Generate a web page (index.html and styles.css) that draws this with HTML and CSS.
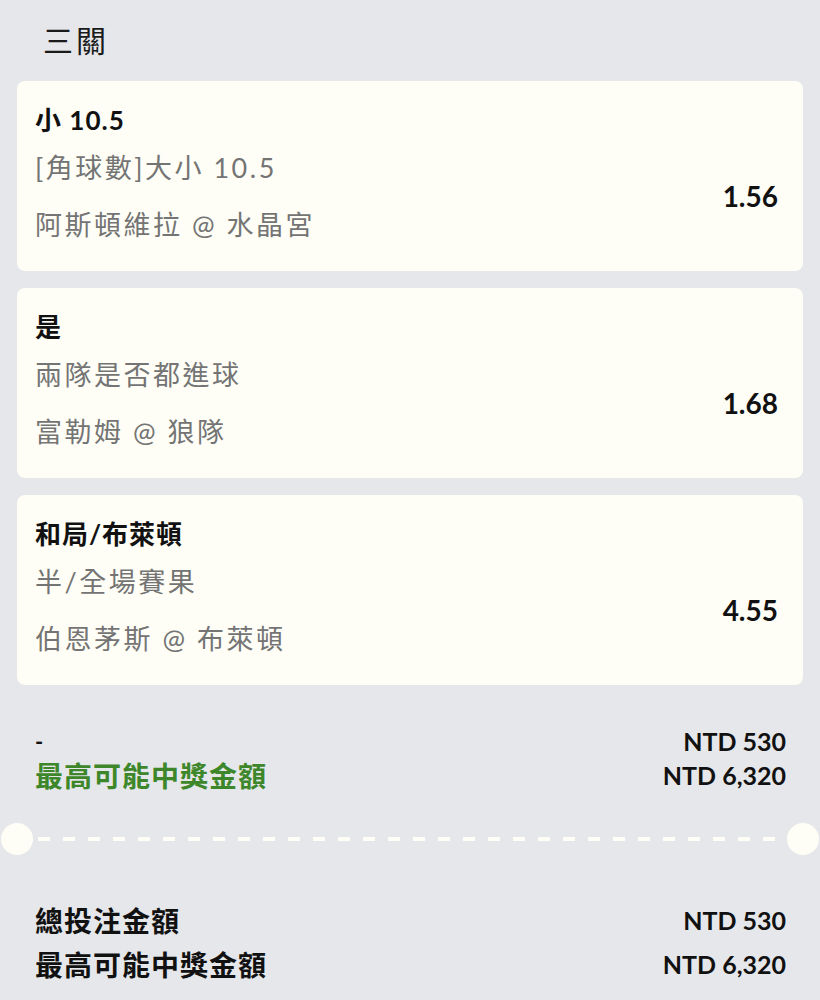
FILE: index.html
```html
<!DOCTYPE html>
<html lang="zh-Hant">
<head>
<meta charset="utf-8">
<link rel="stylesheet" href="styles.css">
</head>
<body>
<div class="page">
  <div class="heading">三關</div>
  <div class="cards">
    <div class="card">
      <div class="info">
        <div class="pick">小 10.5</div>
        <div class="line">[角球數]大小 10.5</div>
        <div class="line">阿斯頓維拉 @ 水晶宮</div>
      </div>
      <div class="odds">1.56</div>
    </div>
    <div class="card">
      <div class="info">
        <div class="pick">是</div>
        <div class="line">兩隊是否都進球</div>
        <div class="line">富勒姆 @ 狼隊</div>
      </div>
      <div class="odds">1.68</div>
    </div>
    <div class="card">
      <div class="info">
        <div class="pick">和局/布萊頓</div>
        <div class="line">半/全場賽果</div>
        <div class="line">伯恩茅斯 @ 布萊頓</div>
      </div>
      <div class="odds">4.55</div>
    </div>
  </div>
  <div class="summary">
    <div class="row"><span class="dash-label">-</span><span class="amount">NTD 530</span></div>
    <div class="row"><span class="label green">最高可能中獎金額</span><span class="amount">NTD 6,320</span></div>
  </div>
  <div class="divider">
    <span class="dot"></span>
    <span class="dashes"></span>
    <span class="dot"></span>
  </div>
  <div class="totals">
    <div class="row tall"><span class="label">總投注金額</span><span class="amount">NTD 530</span></div>
    <div class="row tall"><span class="label">最高可能中獎金額</span><span class="amount">NTD 6,320</span></div>
  </div>
</div>
</body>
</html>
```
FILE: styles.css
```css
* { box-sizing: border-box; }
html, body {
  margin: 0;
  padding: 0;
  background: #e6e7ea;
}
body {
  font-family: Lato, "Noto Sans CJK TC", "Noto Sans", sans-serif;
  color: #111;
  width: 820px;
  height: 1000px;
  overflow: hidden;
}
.page {
  display: flex;
  flex-direction: column;
}
.heading {
  height: 81px;
  line-height: 80px;
  padding-left: 43px;
  font-size: 30px;
  font-weight: 400;
  letter-spacing: 3px;
  color: #1a1a1a;
}
.cards {
  display: flex;
  flex-direction: column;
  gap: 17px;
  padding: 0 17px;
}
.card {
  height: 190px;
  background: #fefef6;
  border-radius: 8px;
  display: flex;
  align-items: center;
  justify-content: space-between;
  padding: 0 25px 0 18px;
}
.info {
  display: flex;
  flex-direction: column;
  padding-top: 2px;
}
.pick {
  font-size: 26px;
  font-weight: 700;
  line-height: 38px;
  letter-spacing: 1px;
}
.line {
  font-size: 27px;
  line-height: 57px;
  color: #747474;
  letter-spacing: 2.5px;
}
.odds {
  font-size: 28px;
  font-weight: 700;
  padding-top: 39px;
}
.summary {
  margin-top: 39px;
  padding: 0 34px 0 35px;
  display: flex;
  flex-direction: column;
}
.row {
  display: flex;
  justify-content: space-between;
  align-items: center;
  height: 34px;
}
.row.tall { height: 44px; }
.dash-label {
  font-size: 22px;
  font-weight: 700;
}
.label {
  font-size: 28px;
  font-weight: 700;
  letter-spacing: 1px;
}
.green { color: #3d872a; }
.amount {
  font-size: 25px;
  font-weight: 700;
}
.divider {
  margin-top: 30px;
  height: 34px;
  display: flex;
  align-items: center;
  padding: 0 1px;
}
.dot {
  width: 32px;
  height: 32px;
  border-radius: 50%;
  background: #fefef6;
  flex: none;
}
.dashes {
  flex: 1;
  height: 4px;
  margin: 0 5px;
  background: repeating-linear-gradient(90deg, #fefef6 0 12px, transparent 12px 25px);
}
.totals {
  margin-top: 42px;
  padding: 0 34px 0 35px;
  display: flex;
  flex-direction: column;
}
```
